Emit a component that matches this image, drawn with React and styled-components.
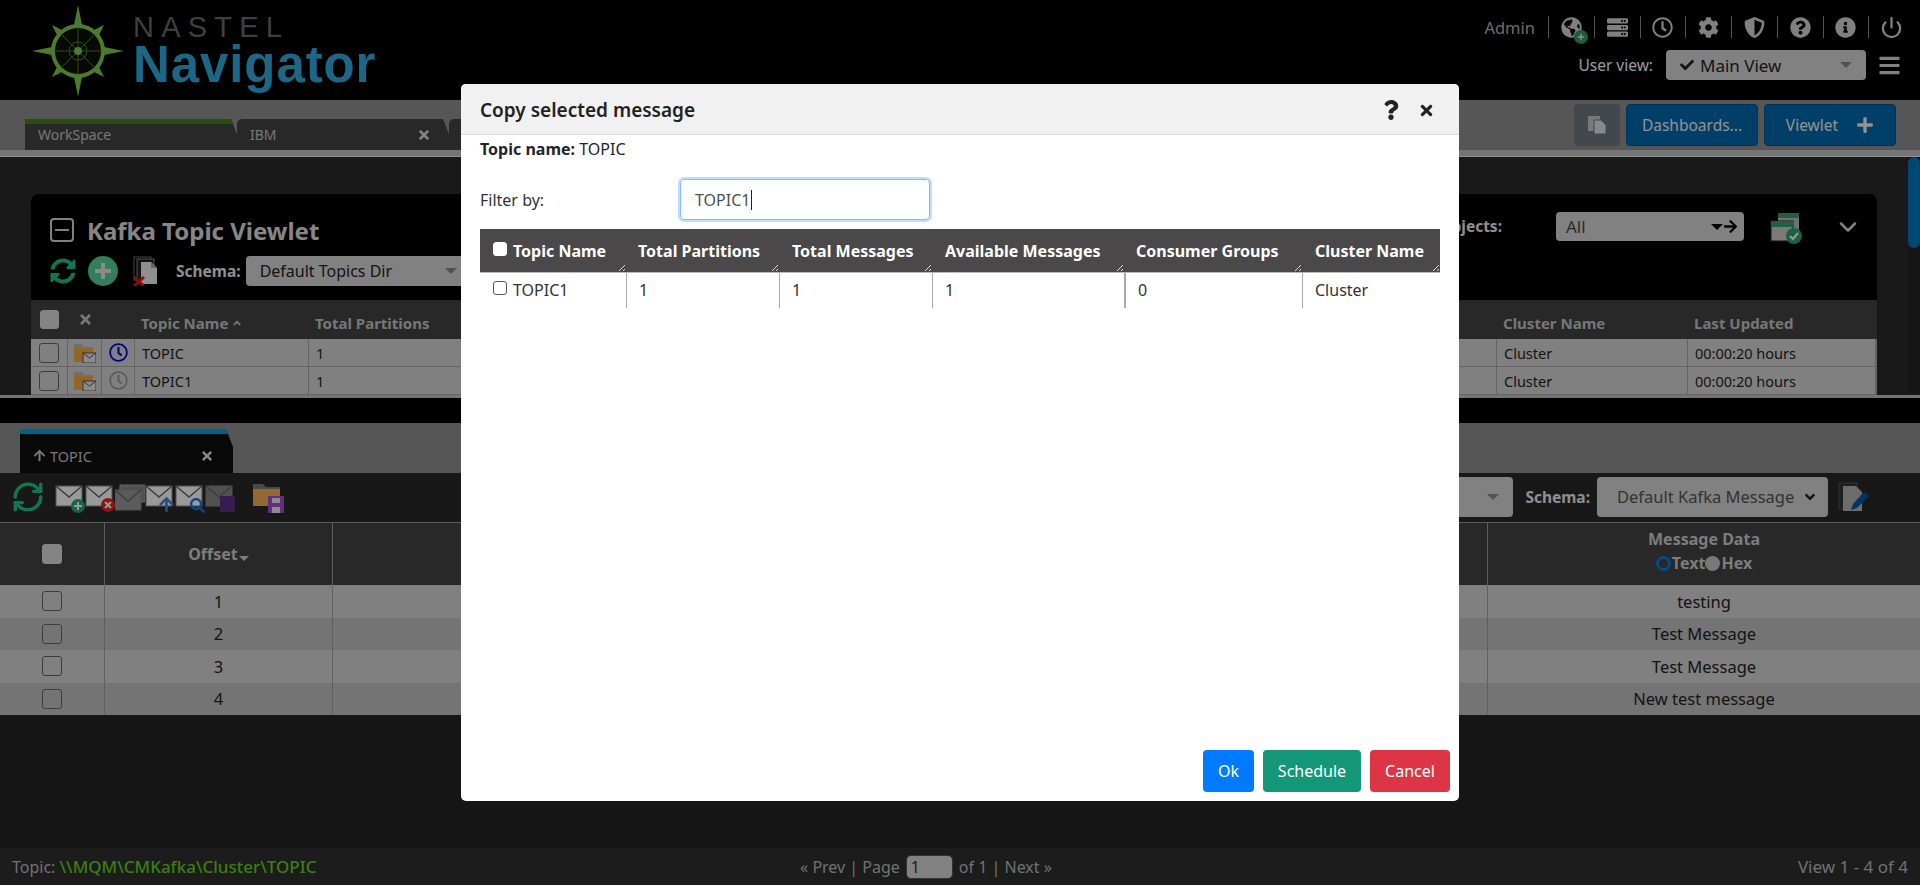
import React from 'react';
import styled, { createGlobalStyle } from 'styled-components';
import {
  FaAngleUp, FaArrowRight, FaArrowUp, FaBars, FaCheck, FaCog, FaInfoCircle, FaPlus, FaQuestion,
  FaQuestionCircle, FaRegClock, FaServer, FaShieldAlt, FaSyncAlt, FaTimes, FaGlobeAmericas,
  FaAngleDown, FaSearch,
} from 'react-icons/fa';
import { ChevronDown, Power, RefreshCw } from 'lucide-react';

const Global = createGlobalStyle`
  html, body { margin: 0; padding: 0; background: #000; }
  body { font-family: "Noto Sans", "Open Sans", "Liberation Sans", sans-serif; overflow: hidden; }
  * { box-sizing: border-box; }
`;

const Page = styled.div`
  position: relative;
  width: 1920px;
  height: 885px;
  overflow: hidden;
  display: flex;
  flex-direction: column;
`;

const Backdrop = styled.div`
  position: absolute;
  inset: 0;
  background: rgba(0, 0, 0, 0.4);
`;

/* header */
const Header = styled.header`
  height: 100px;
  flex: none;
  background: #000;
  display: flex;
  justify-content: space-between;
`;
const Logo = styled.div`
  display: flex;
  padding: 5px 0 0 32px;
  gap: 9px;
`;
const LogoWords = styled.div`
  display: flex;
  flex-direction: column;
  font-family: "Liberation Sans", sans-serif;
`;
const LogoTop = styled.div`
  font-size: 29px;
  line-height: 30px;
  margin-top: 7px;
  letter-spacing: 7.2px;
  color: #6a6a6a;
  font-weight: 400;
`;
const LogoBottom = styled.div`
  font-size: 51px;
  line-height: 46px;
  font-weight: 700;
  letter-spacing: 0.9px;
  color: #2fabdf;
`;
const HeaderRight = styled.div`
  width: 440px;
  padding: 16px 6px 0 0;
  display: flex;
  flex-direction: column;
  align-items: flex-end;
`;
const TopIcons = styled.div`
  display: flex;
  align-items: center;
  height: 22px;
  color: #d5d5d5;
`;
const AdminName = styled.span`
  font-size: 16.5px;
  color: #b4b4b4;
  margin-right: 13px;
`;
const IconSlot = styled.span`
  position: relative;
  width: 45.75px;
  height: 22px;
  display: flex;
  align-items: center;
  justify-content: center;
  border-left: 1px solid #8a8a8a;
  font-size: 21px;
`;
const GlobeBadge = styled.span`
  position: absolute;
  right: 6px;
  bottom: -6px;
  width: 14px;
  height: 14px;
  border-radius: 50%;
  background: #2f9c55;
  color: #e8e8e8;
  font-size: 8px;
  display: flex;
  align-items: center;
  justify-content: center;
`;
const ViewRow = styled.div`
  display: flex;
  align-items: center;
  margin: 12px 13px 0 0;
  color: #fff;
`;
const ViewLabel = styled.span`
  font-size: 15.5px;
  margin-right: 13px;
`;
const MenuIcon = styled.span`
  margin-left: 12px;
  font-size: 23px;
  display: flex;
  color: #d5d5d5;
`;
const Select = styled.div`
  display: flex;
  align-items: center;
  width: ${(p) => p.$w}px;
  height: ${(p) => p.$h}px;
  padding: 0 ${(p) => p.$pr || 14}px 0 ${(p) => p.$pl || 14}px;
  background: #d7d7d7;
  border-radius: 4px;
  color: ${(p) => p.$color || '#222'};
  font-size: ${(p) => p.$fs || 16}px;
  white-space: nowrap;
  gap: 6px;
`;
const SelectText = styled.span`
  flex: 1;
`;
const Caret = styled.span`
  width: 0;
  height: 0;
  border-left: 6px solid transparent;
  border-right: 6px solid transparent;
  border-top: 6px solid ${(p) => p.$color || '#888'};
`;

/* tabs */
const TabBar = styled.div`
  flex: none;
  height: ${(p) => p.$h}px;
  background: #8f8f8f;
  display: flex;
  align-items: flex-end;
  padding-left: ${(p) => p.$pl}px;
`;
const Tab = styled.div`
  width: 213px;
  height: ${(p) => p.$h || 31}px;
  margin-right: -1px;
  background: ${(p) => p.$bg || '#444'};
  border-top: 5px solid ${(p) => p.$top || '#444'};
  border-top-left-radius: ${(p) => (p.$round ? 5 : 0)}px;
  clip-path: polygon(0 0, 206px 0, 213px 18px, 213px 100%, 0 100%);
  color: #c6c6c6;
  font-size: ${(p) => p.$fs || 14}px;
  display: flex;
  align-items: center;
  justify-content: space-between;
  padding: ${(p) => p.$pt || 0}px 19px ${(p) => p.$pb || 0}px 13px;
`;
const TabText = styled.span`
  display: flex;
  align-items: center;
  gap: 4px;
`;
const TabClose = styled.span`
  display: flex;
  font-size: 14px;
  color: #e2e2e2;
`;
const TabActions = styled.div`
  margin-left: auto;
  align-self: flex-start;
  display: flex;
  gap: 6px;
  padding: 4px 24px 0 0;
`;
const CopyButton = styled.div`
  width: 46px;
  height: 42px;
  background: #6e7880;
  border-radius: 4px;
  display: flex;
  align-items: center;
  justify-content: center;
`;
const BlueButton = styled.div`
  width: 132px;
  height: 42px;
  background: #0069ad;
  border: 1px solid #00548c;
  border-radius: 4px;
  color: #f4f4f4;
  font-size: 15.5px;
  display: flex;
  align-items: center;
  justify-content: center;
  gap: 18px;
`;
const PlusMark = styled.span`
  font-size: 18px;
  display: flex;
`;
const Strip = styled.div`
  flex: none;
  height: 7px;
  background: #c4c4c4;
  border-bottom: 1px solid #eee;
`;

/* top viewlet */
const ViewletArea = styled.section`
  flex: none;
  height: 238px;
  background: #2b2b2b;
  display: flex;
  overflow: hidden;
`;
const ViewletInner = styled.div`
  flex: 1;
  padding: 37px 31px 0 31px;
`;
const ScrollTrack = styled.div`
  width: 12px;
  background: #242424;
  border-radius: 0 0 6px 6px;
`;
const ScrollThumb = styled.div`
  height: 91px;
  background: #0078bd;
  border-radius: 6px 6px 6px 6px;
`;
const Card = styled.div`
  height: 230px;
  background: #000;
  border-radius: 8px 8px 0 0;
`;
const CardTop = styled.div`
  height: 106px;
  display: flex;
  justify-content: space-between;
`;
const CardLeft = styled.div`
  padding: 21px 0 0 19px;
`;
const TitleRow = styled.div`
  display: flex;
  align-items: center;
  gap: 13px;
  height: 30px;
`;
const Collapse = styled.span`
  width: 24px;
  height: 24px;
  border: 2px solid #d8d8d8;
  border-radius: 4px;
  display: flex;
  align-items: center;
  justify-content: center;
  &::after {
    content: '';
    width: 14px;
    height: 2px;
    background: #d8d8d8;
  }
`;
const Title = styled.h2`
  margin: 0;
  font-size: 24px;
  font-weight: 700;
  color: #e0e0e0;
`;
const CardTools = styled.div`
  display: flex;
  align-items: center;
  margin-top: 11px;
`;
const SchemaLabel = styled.span`
  font-size: 15.5px;
  font-weight: 700;
  color: #eee;
  margin: 0 ${(p) => p.$mr || 5}px 0 ${(p) => p.$ml || 0}px;
`;
const CardRight = styled.div`
  display: flex;
  align-items: flex-start;
  padding: 18px 15px 0 0;
`;
const ObjectsLabel = styled(SchemaLabel)`
  margin: 3px 54px 0 0;
  font-size: 15.5px;
`;
const ChevronBtn = styled.span`
  display: flex;
  margin: 1px 0 0 32px;
  color: #d8d8d8;
`;

const GridRow = styled.div`
  display: grid;
  grid-template-columns: ${(p) => p.$cols};
  height: ${(p) => p.$h}px;
  background: ${(p) => p.$bg};
  color: ${(p) => p.$color || '#222'};
`;
const TopHead = styled.div`
  display: flex;
  align-items: center;
  gap: 3px;
  padding: ${(p) => (p.$center ? '0' : '6px 0 0 6px')};
  justify-content: ${(p) => (p.$center ? 'center' : 'flex-start')};
  font-size: 15px;
  font-weight: 700;
  color: #c6c6c6;
  white-space: nowrap;
`;
const TopCell = styled.div`
  display: flex;
  align-items: center;
  justify-content: ${(p) => (p.$center ? 'center' : 'flex-start')};
  padding-left: ${(p) => (p.$center ? 0 : 7)}px;
  border-right: 1px solid #a8a8a8;
  border-bottom: 1px solid #a8a8a8;
  font-size: 14.5px;
  white-space: nowrap;
  &:last-child { border-right: 2px solid #a8a8a8; }
`;
const Box = styled.span`
  display: inline-block;
  width: ${(p) => p.$s || 20}px;
  height: ${(p) => p.$s || 20}px;
  border: 1px solid ${(p) => p.$line || '#666'};
  border-radius: ${(p) => p.$r || 3}px;
  background: ${(p) => p.$fill || 'transparent'};
  margin-bottom: ${(p) => p.$up || 0}px;
  flex: none;
`;
const ClockMark = styled.span`
  display: flex;
  font-size: 19px;
  color: ${(p) => p.$color};
`;

const Splitter = styled.div`
  flex: none;
  height: 3px;
  background: #c4c4c4;
`;
const BlackGap = styled.div`
  flex: none;
  height: 25px;
  background: #000;
`;

/* bottom message panel */
const ToolRow = styled.div`
  flex: none;
  height: 50px;
  background: #282828;
  display: flex;
  align-items: center;
  padding: 0 50px 2px 11px;
  border-bottom: 1px solid #9a9a9a;
`;
const ToolRight = styled.div`
  margin-left: auto;
  display: flex;
  align-items: center;
`;
const MsgHead = styled.div`
  display: flex;
  flex-direction: column;
  align-items: center;
  justify-content: center;
  padding-bottom: ${(p) => p.$pb || 0}px;
  font-size: 16px;
  font-weight: 700;
  color: #d0d0d0;
  border-right: 1px solid #9a9a9a;
  line-height: 25px;
  &:last-child { border-right: 0; }
`;
const SortMark = styled.span`
  display: inline-block;
  margin-left: 1px;
  border-left: 5px solid transparent;
  border-right: 5px solid transparent;
  border-top: 5px solid #d0d0d0;
  vertical-align: -1px;
`;
const RadioRow = styled.div`
  display: flex;
  align-items: center;
  line-height: 22px;
`;
const Radio = styled.span`
  width: 15px;
  height: 15px;
  border-radius: 50%;
  background: ${(p) => (p.$on ? 'transparent' : '#c8c8c8')};
  border: ${(p) => (p.$on ? '3px solid #0a7ae0' : '0')};
  margin-right: 1px;
`;
const MsgCell = styled.div`
  display: flex;
  align-items: center;
  justify-content: center;
  font-size: 16.5px;
  border-right: 1px solid #a0a0a0;
  &:last-child { border-right: 0; }
`;
const Filler = styled.div`
  flex: 1;
  background: #252525;
`;
const Footer = styled.footer`
  flex: none;
  height: 37px;
  background: #2f2f2f;
  display: grid;
  grid-template-columns: 1fr 1fr 1fr;
  align-items: center;
  padding: 0 12px;
  font-size: 16px;
  color: #bdbdbd;
`;
const TopicPath = styled.span`
  color: #66d116;
  font-size: 17px;
  font-weight: 500;
`;
const Pager = styled.div`
  display: flex;
  align-items: center;
  justify-content: center;
  gap: 6px;
  padding-right: 68px;
  white-space: nowrap;
`;
const PageBox = styled.span`
  width: 47px;
  height: 24px;
  background: #d7d7d7;
  border: 1px solid #555;
  border-radius: 5px;
  color: #333;
  padding-left: 4px;
  line-height: 22px;
`;
const ViewCount = styled.div`
  text-align: right;
  font-size: 17px;
`;

/* modal */
const Modal = styled.div`
  position: absolute;
  left: 461px;
  top: 84px;
  width: 998px;
  height: 717px;
  background: #fff;
  border-radius: 5px;
  display: flex;
  flex-direction: column;
  color: #212529;
`;
const ModalHead = styled.div`
  height: 51px;
  flex: none;
  background: #f1f1f1;
  border-bottom: 1px solid #dcdcdc;
  border-radius: 5px 5px 0 0;
  display: flex;
  align-items: center;
  justify-content: space-between;
  padding: 2px 24px 0 19px;
`;
const ModalTitle = styled.h5`
  margin: 0;
  font-size: 19px;
  font-weight: 600;
  color: #222;
`;
const ModalIcons = styled.div`
  display: flex;
  align-items: center;
  gap: 17px;
  color: #222;
`;
const ModalBody = styled.div`
  flex: 1;
  padding: 0 19px;
`;
const TopicLine = styled.div`
  font-size: 16px;
  line-height: 28px;
  margin-bottom: 16px;
`;
const TopicStrong = styled.strong`
  font-weight: 700;
`;
const FilterRow = styled.div`
  display: flex;
  align-items: center;
  height: 41px;
  font-size: 16px;
`;
const FilterLabel = styled.span`
  width: 200px;
  color: #333;
`;
const FilterBox = styled.div`
  width: 250px;
  height: 41px;
  border: 1px solid #80bdff;
  border-radius: 4px;
  box-shadow: 0 0 0 2px rgba(0, 123, 255, 0.25);
  display: flex;
  align-items: center;
  padding-left: 14px;
  font-size: 16px;
  color: #495057;
`;
const TextCaret = styled.span`
  width: 1px;
  height: 20px;
  background: #222;
  margin-left: 1px;
`;
const ResultHead = styled.div`
  display: grid;
  grid-template-columns: 146px 153px 153px 192px 178px 138px;
  height: 44px;
  margin-top: 9px;
  background: #4a4848;
  border-bottom: 1px solid #bbb;
  color: #fff;
  font-size: 16px;
  font-weight: 700;
`;
const ResultHeadCell = styled.div`
  position: relative;
  display: flex;
  align-items: center;
  gap: 6px;
  padding-left: ${(p) => p.$pl}px;
  white-space: nowrap;
  &::after {
    content: '';
    position: absolute;
    right: 1px;
    bottom: 1px;
    width: 9px;
    height: 9px;
    background: repeating-linear-gradient(135deg, transparent 0 2px, #d8d8d8 2px 3px);
    clip-path: polygon(100% 0, 100% 100%, 0 100%);
  }
`;
const ResultRow = styled.div`
  display: grid;
  grid-template-columns: 146px 153px 153px 192px 178px 138px;
  height: 35px;
`;
const ResultCell = styled.div`
  display: flex;
  align-items: center;
  gap: 6px;
  padding-left: ${(p) => p.$pl}px;
  padding-bottom: 2px;
  font-size: 16px;
  color: #333;
  border-left: ${(p) => (p.$first ? '0' : `${p.$thick ? 2 : 1}px solid #aaa`)};
`;
const ModalFoot = styled.div`
  flex: none;
  display: flex;
  justify-content: flex-end;
  gap: 9px;
  padding: 0 9px 9px 0;
`;
const ActionBtn = styled.div`
  height: 42px;
  width: ${(p) => p.$w}px;
  background: ${(p) => p.$bg};
  color: #fff;
  border-radius: 4px;
  font-size: 16px;
  display: flex;
  align-items: center;
  justify-content: center;
`;

const Compass = () => (
  <svg width="92" height="92" viewBox="0 0 92 92">
    <g fill="#7fcb4e">
      <polygon points="46,0 52,30 40,30" />
      <polygon points="46,92 52,62 40,62" />
      <polygon points="0,46 30,40 30,52" />
      <polygon points="92,46 62,40 62,52" />
      <polygon points="20,20 30,25 25,30" />
      <polygon points="72,20 62,25 67,30" />
      <polygon points="20,72 30,67 25,62" />
      <polygon points="72,72 62,67 67,62" />
    </g>
    <circle cx="46" cy="46" r="25" fill="#0b1206" stroke="#7fcb4e" strokeWidth="4" />
    <g stroke="#4d7d2f" strokeWidth="1">
      <line x1="46" y1="22" x2="46" y2="70" />
      <line x1="22" y1="46" x2="70" y2="46" />
      <line x1="29" y1="29" x2="63" y2="63" />
      <line x1="63" y1="29" x2="29" y2="63" />
    </g>
    <circle cx="46" cy="46" r="9" fill="none" stroke="#4d7d2f" />
    <circle cx="46" cy="46" r="4" fill="#7fcb4e" />
  </svg>
);

const CopyIcon = () => (
  <svg width="20" height="20" viewBox="0 0 20 20">
    <rect x="1" y="1" width="12" height="15" fill="#c8c8c8" />
    <path d="M7 5h7l5 5v9H7z" fill="#e4e4e4" stroke="#717c85" />
  </svg>
);

const FileDelete = () => (
  <svg width="26" height="30" viewBox="0 0 26 30" style={{ marginLeft: 15 }}>
    <rect x="1" y="1" width="17" height="23" fill="none" stroke="#777" />
    <rect x="4" y="3" width="17" height="23" fill="#222" stroke="#888" />
    <path d="M8 6h10l6 6v16H8z" fill="#eee" />
    <path d="M18 6v6h6" fill="#aaa" />
    <path d="M1 21l10 9M11 21L1 30" stroke="#e01818" strokeWidth="3" />
  </svg>
);

const WindowsCheck = () => (
  <svg width="32" height="32" viewBox="0 0 32 32" style={{ marginLeft: 26 }}>
    <rect x="8" y="1" width="21" height="24" fill="#bcbcbc" />
    <rect x="8" y="1" width="21" height="5" fill="#3a9c74" />
    <rect x="1" y="9" width="22" height="20" fill="#ccc" stroke="#222" />
    <rect x="1" y="9" width="22" height="6" fill="#3a9c74" />
    <circle cx="24" cy="24" r="8" fill="#2ea36f" />
    <path d="M20 24l3 3 5-6" fill="none" stroke="#fff" strokeWidth="2" />
  </svg>
);

const FolderMail = () => (
  <svg width="22" height="20" viewBox="0 0 22 20">
    <path d="M0 1h8l2 3h9v4H0z" fill="#b9b9b9" />
    <path d="M0 5h19v14H0z" fill="#f0aa48" />
    <rect x="9" y="10" width="13" height="10" fill="#e8e8e8" stroke="#555" />
    <path d="M9 10l6.5 5L22 10" fill="none" stroke="#555" />
  </svg>
);

const MailBadge = ({ kind }) => {
  const paper = kind === 'stack' ? '#9a9a9a' : kind === 'savedim' ? '#888' : '#fff';
  return (
    <svg width="30" height="30" viewBox="0 0 30 30" style={{ flex: 'none' }}>
      {kind === 'stack' && <rect x="5" y="2" width="25" height="17" fill="#888" stroke="#aaa" />}
      <rect x={kind === 'stack' ? 0 : 1} y={kind === 'stack' ? 7 : 3} width="26" height="20" fill={paper} stroke="#888" />
      <path d={kind === 'stack' ? 'M0 7l13 11L26 7' : 'M1 3l13 11L27 3'} fill="none" stroke="#666" strokeWidth="1.5" />
      {kind === 'add' && <circle cx="23" cy="23" r="7" fill="#2ea36f" />}
      {kind === 'add' && <path d="M23 19v8M19 23h8" stroke="#fff" strokeWidth="2" />}
      {kind === 'del' && <circle cx="23" cy="22" r="7" fill="#ef1f1f" />}
      {kind === 'del' && <path d="M20 19l6 6M26 19l-6 6" stroke="#fff" strokeWidth="2" />}
      {kind === 'savedim' && <rect x="15" y="13" width="15" height="16" fill="#5c2f86" />}
    </svg>
  );
};

const ToolSlot = styled.span`
  position: relative;
  width: 30px;
  height: 30px;
  margin: 3px 0 0 0;
  display: flex;
  flex: none;
`;
const SlotBadge = styled.span`
  position: absolute;
  right: 0;
  bottom: 0;
  display: flex;
  font-size: ${(p) => p.$fs}px;
  color: ${(p) => p.$color};
`;
const FolderSave = () => (
  <svg width="32" height="30" viewBox="0 0 32 30" style={{ marginLeft: 18, marginTop: 3 }}>
    <path d="M0 1h10l3 3h14v5H0z" fill="#7a7a7a" />
    <path d="M0 6h27v17H0z" fill="#f4b052" />
    <rect x="15" y="13" width="16" height="17" fill="#a24fd8" />
    <rect x="19" y="15" width="8" height="5" fill="#e8e8e8" />
    <rect x="19" y="24" width="8" height="6" fill="#e8e8e8" />
  </svg>
);

const EditFile = () => (
  <svg width="32" height="32" viewBox="0 0 32 32" style={{ marginLeft: 10 }}>
    <rect x="1" y="2" width="18" height="26" fill="#333" stroke="#555" />
    <path d="M5 5h13l6 6v19H5z" fill="#b4b4b4" />
    <path d="M13 29l2-6 11-12 5 4-12 12z" fill="#0a55a8" />
  </svg>
);

const topCols = '37px 34px 33px 174px 238px 238px 238px 238px 236px 191px 189px';
const topHeads = ['Topic Name', 'Total Partitions', 'Total Messages', 'Available Messages', 'Consumer Groups', '', 'Cluster Name', 'Last Updated'];
const topRows = [
  { name: 'TOPIC', clock: '#0000e8' },
  { name: 'TOPIC1', clock: '#9a9a9a' },
];
const msgCols = '105px 228px 1fr 432px';
const messages = [
  { offset: 1, text: 'testing', bg: '#d6d6d6' },
  { offset: 2, text: 'Test Message', bg: '#c2c2c2' },
  { offset: 3, text: 'Test Message', bg: '#d6d6d6' },
  { offset: 4, text: 'New test message', bg: '#c2c2c2' },
];
const resultHeads = [
  ['Topic Name', 13],
  ['Total Partitions', 12],
  ['Total Messages', 13],
  ['Available Messages', 13],
  ['Consumer Groups', 12],
  ['Cluster Name', 13],
];

const App = () => {
  return (
    <Page>
      <Global />
      <Header>
        <Logo>
          <Compass />
          <LogoWords>
            <LogoTop>NASTEL</LogoTop>
            <LogoBottom>Navigator</LogoBottom>
          </LogoWords>
        </Logo>
        <HeaderRight>
          <TopIcons>
            <AdminName>Admin</AdminName>
            <IconSlot>
              <FaGlobeAmericas />
              <GlobeBadge><FaPlus /></GlobeBadge>
            </IconSlot>
            <IconSlot><FaServer /></IconSlot>
            <IconSlot><FaRegClock /></IconSlot>
            <IconSlot><FaCog /></IconSlot>
            <IconSlot><FaShieldAlt /></IconSlot>
            <IconSlot><FaQuestionCircle /></IconSlot>
            <IconSlot><FaInfoCircle /></IconSlot>
            <IconSlot><Power size={23} strokeWidth={2.4} /></IconSlot>
          </TopIcons>
          <ViewRow>
            <ViewLabel>User view:</ViewLabel>
            <Select $w={200} $h={30} $color="#222" $fs={17}>
              <FaCheck size={14} />
              <SelectText>Main View</SelectText>
              <Caret />
            </Select>
            <MenuIcon><FaBars /></MenuIcon>
          </ViewRow>
        </HeaderRight>
      </Header>

      <TabBar $h={50} $pl={25}>
        <Tab $top="#4b801b" $pb={5}>WorkSpace</Tab>
        <Tab $round $pb={5}>
          IBM
          <TabClose><FaTimes /></TabClose>
        </Tab>
        <Tab $round />
        <TabActions>
          <CopyButton><CopyIcon /></CopyButton>
          <BlueButton>Dashboards...</BlueButton>
          <BlueButton>Viewlet<PlusMark><FaPlus /></PlusMark></BlueButton>
        </TabActions>
      </TabBar>
      <Strip />

      <ViewletArea>
        <ViewletInner>
          <Card>
            <CardTop>
              <CardLeft>
                <TitleRow>
                  <Collapse />
                  <Title>Kafka Topic Viewlet</Title>
                </TitleRow>
                <CardTools>
                  <FaSyncAlt size={26} color="#1ec684" />
                  <svg width="30" height="30" viewBox="0 0 30 30" style={{ marginLeft: 12 }}>
                    <circle cx="15" cy="15" r="15" fill="#55d29c" />
                    <path d="M15 7v16M7 15h16" stroke="#e8e8e8" strokeWidth="4" />
                  </svg>
                  <FileDelete />
                  <SchemaLabel $ml={17}>Schema:</SchemaLabel>
                  <Select $w={225} $h={30}>
                    <SelectText>Default Topics Dir</SelectText>
                    <Caret />
                  </Select>
                </CardTools>
              </CardLeft>
              <CardRight>
                <ObjectsLabel>Objects:</ObjectsLabel>
                <Select $w={188} $h={29} $color="#4a4a4a" $fs={17} $pl={10} $pr={6}>
                  <SelectText>All</SelectText>
                  <Caret $color="#000" />
                  <FaArrowRight size={15} color="#000" style={{ marginLeft: -6 }} />
                </Select>
                <WindowsCheck />
                <ChevronBtn><ChevronDown size={28} strokeWidth={2.2} /></ChevronBtn>
              </CardRight>
            </CardTop>
            <GridRow $cols={topCols} $h={39} $bg="#434343">
              <TopHead $center><Box $s={19} $fill="#ddd" $line="#ddd" /></TopHead>
              <TopHead $center><FaTimes size={15} /></TopHead>
              <TopHead />
              {topHeads.map((head, i) => (
                <TopHead key={i}>{head}{i === 0 && <FaAngleUp size={12} />}</TopHead>
              ))}
            </GridRow>
            {topRows.map((row) => (
              <GridRow $cols={topCols} $h={28} $bg="#d6d6d6" key={row.name}>
                <TopCell $center><Box /></TopCell>
                <TopCell $center><FolderMail /></TopCell>
                <TopCell $center><ClockMark $color={row.clock}><FaRegClock /></ClockMark></TopCell>
                <TopCell>{row.name}</TopCell>
                <TopCell>1</TopCell>
                <TopCell>1</TopCell>
                <TopCell>1</TopCell>
                <TopCell>0</TopCell>
                <TopCell />
                <TopCell>Cluster</TopCell>
                <TopCell>00:00:20 hours</TopCell>
              </GridRow>
            ))}
          </Card>
        </ViewletInner>
        <ScrollTrack><ScrollThumb /></ScrollTrack>
      </ViewletArea>
      <Splitter />
      <BlackGap />

      <TabBar $h={50} $pl={20}>
        <Tab $h={44} $bg="#101010" $top="#00a3dc" $pt={4} $fs={14.5}>
          <TabText><FaArrowUp size={13} /> TOPIC</TabText>
          <TabClose><FaTimes /></TabClose>
        </Tab>
      </TabBar>
      <ToolRow>
        <RefreshCw size={34} color="#1ec684" strokeWidth={2.4} style={{ marginRight: 10 }} />
        <ToolSlot><MailBadge kind="add" /></ToolSlot>
        <ToolSlot><MailBadge kind="del" /></ToolSlot>
        <ToolSlot><MailBadge kind="stack" /></ToolSlot>
        <ToolSlot>
          <MailBadge />
          <SlotBadge $fs={17} $color="#3b86dc"><FaArrowUp /></SlotBadge>
        </ToolSlot>
        <ToolSlot>
          <MailBadge />
          <SlotBadge $fs={15} $color="#0a7ae0"><FaSearch /></SlotBadge>
        </ToolSlot>
        <ToolSlot><MailBadge kind="savedim" /></ToolSlot>
        <FolderSave />
        <ToolRight>
          <Select $w={240} $h={40}>
            <SelectText />
            <Caret />
          </Select>
          <SchemaLabel $ml={12} $mr={7}>Schema:</SchemaLabel>
          <Select $w={231} $h={40} $color="#555" $fs={16.5} $pl={20} $pr={10}>
            <SelectText>Default Kafka Message</SelectText>
            <FaAngleDown size={16} color="#222" />
          </Select>
          <EditFile />
        </ToolRight>
      </ToolRow>
      <GridRow $cols={msgCols} $h={62} $bg="#434343">
        <MsgHead><Box $fill="#ddd" $line="#ddd" /></MsgHead>
        <MsgHead><span>Offset<SortMark /></span></MsgHead>
        <MsgHead />
        <MsgHead $pb={7}>
          Message Data
          <RadioRow>
            <Radio $on />Text<Radio />Hex
          </RadioRow>
        </MsgHead>
      </GridRow>
      {messages.map((msg) => (
        <GridRow $cols={msgCols} $h={32.5} $bg={msg.bg} key={msg.offset}>
          <MsgCell><Box /></MsgCell>
          <MsgCell>{msg.offset}</MsgCell>
          <MsgCell />
          <MsgCell>{msg.text}</MsgCell>
        </GridRow>
      ))}
      <Filler />
      <Footer>
        <div>Topic: <TopicPath>\\MQM\CMKafka\Cluster\TOPIC</TopicPath></div>
        <Pager>
          « Prev | Page <PageBox>1</PageBox> of 1 | Next »
        </Pager>
        <ViewCount>View 1 - 4 of 4</ViewCount>
      </Footer>

      <Backdrop />
      <Modal>
        <ModalHead>
          <ModalTitle>Copy selected message</ModalTitle>
          <ModalIcons>
            <FaQuestion size={20} />
            <FaTimes size={17} />
          </ModalIcons>
        </ModalHead>
        <ModalBody>
          <TopicLine><TopicStrong>Topic name:</TopicStrong> TOPIC</TopicLine>
          <FilterRow>
            <FilterLabel>Filter by:</FilterLabel>
            <FilterBox>TOPIC1<TextCaret /></FilterBox>
          </FilterRow>
          <ResultHead>
            {resultHeads.map(([head, pl], i) => (
              <ResultHeadCell $pl={pl} key={head}>
                {i === 0 && <Box $s={14} $fill="#fff" $line="#fff" $up={3} />}
                {head}
              </ResultHeadCell>
            ))}
          </ResultHead>
          <ResultRow>
            <ResultCell $first $pl={13}><Box $s={14} $line="#555" $up={3} />TOPIC1</ResultCell>
            <ResultCell $pl={12}>1</ResultCell>
            <ResultCell $pl={12}>1</ResultCell>
            <ResultCell $pl={12}>1</ResultCell>
            <ResultCell $thick $pl={12}>0</ResultCell>
            <ResultCell $pl={12}>Cluster</ResultCell>
          </ResultRow>
        </ModalBody>
        <ModalFoot>
          <ActionBtn $w={51} $bg="#007bff">Ok</ActionBtn>
          <ActionBtn $w={98} $bg="#149777">Schedule</ActionBtn>
          <ActionBtn $w={80} $bg="#dc3545">Cancel</ActionBtn>
        </ModalFoot>
      </Modal>
    </Page>
  );
};

export default App;
